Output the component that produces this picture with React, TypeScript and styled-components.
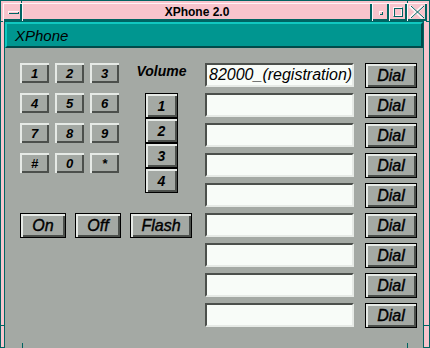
import { Fragment } from 'react'
import styled, { createGlobalStyle } from 'styled-components'

// colours
const pink = '#f8c4cc'
const pinkLight = '#fff4f6'
const teal = '#006462'
const gray = '#a4a9a4'
const light = '#e6eae6'
const dark = '#4c504c'

const GlobalStyle = createGlobalStyle`
  html, body {
    margin: 0;
    padding: 0;
    background: #ffffff;
  }
  body {
    font-family: "Liberation Sans", Arial, sans-serif;
  }
`

// window frame
const Window = styled.div`
  position: relative;
  width: 430px;
  height: 348px;
  box-sizing: border-box;
  background: ${pink};
  padding: 3px 3px 0 3px;
  box-shadow: inset 1px 1px 0 ${teal}, inset -1px -1px 0 ${teal};
  display: flex;
  flex-direction: column;
`

const CornerMark = styled.span<{ $top: number; $left: number; $w: number; $h: number }>`
  position: absolute;
  top: ${(p) => p.$top}px;
  left: ${(p) => p.$left}px;
  width: ${(p) => p.$w}px;
  height: ${(p) => p.$h}px;
  background: ${teal};
`

const TitleBar = styled.div`
  display: flex;
  height: 18px;
`

const FrameButton = styled.div<{ $width: number }>`
  width: ${(p) => p.$width}px;
  flex: ${(p) => (p.$width ? '0 0 auto' : '1 1 auto')};
  box-sizing: border-box;
  background: ${pink};
  box-shadow: inset 1px 1px 0 ${pinkLight}, inset -2px -2px 0 ${teal};
  display: flex;
  align-items: center;
  justify-content: center;
`

const Title = styled(FrameButton)`
  font-size: 12px;
  font-weight: bold;
  color: #000;
  padding-bottom: 1px;
`

const MenuGlyph = styled.span`
  width: 11px;
  height: 3px;
  margin-left: 1px;
  background: ${pink};
  box-shadow: inset 1px 1px 0 ${pinkLight}, inset -1px -1px 0 ${teal};
`

const MinGlyph = styled.span`
  width: 4px;
  height: 4px;
  margin-top: 1px;
  background: ${pink};
  box-shadow: inset 1px 1px 0 ${pinkLight}, inset -1px -1px 0 ${teal};
`

const MaxGlyph = styled.span`
  width: 10px;
  height: 10px;
  box-sizing: border-box;
  border: 1px solid;
  border-color: ${pinkLight} ${teal} ${teal} ${pinkLight};
  box-shadow: inset 1px 1px 0 ${teal}, inset -1px -1px 0 ${pinkLight};
`

const Client = styled.div`
  margin: 1px 4px 0 2px;
  flex: 1;
  display: flex;
  flex-direction: column;
  box-shadow: 0 0 0 1px ${teal};
`

const MenuBar = styled.div`
  height: 26px;
  box-sizing: border-box;
  background: #009690;
  border: 2px solid;
  border-color: #10c8c0 #004a4a #004a4a #10c8c0;
  padding-left: 8px;
  display: flex;
  align-items: center;
  font-size: 15px;
  font-style: italic;
  color: #000;
`

const Body = styled.div`
  flex: 1;
  background: ${gray};
  padding: 15px 0 0 15px;
  display: flex;
  align-items: flex-start;
`

// left side
const LeftPane = styled.div`
  width: 185px;
  display: flex;
  flex-direction: column;
`

const TopArea = styled.div`
  display: flex;
  align-items: flex-start;
`

const Keypad = styled.div`
  display: grid;
  grid-template-columns: repeat(3, 29px);
  grid-auto-rows: 20px;
  column-gap: 6px;
  row-gap: 10px;
`

const KeyButton = styled.button`
  box-sizing: border-box;
  margin: 0;
  padding: 0;
  border: none;
  background: ${gray};
  box-shadow: inset 2px 2px 0 ${light}, inset -2px -2px 0 ${dark};
  font-family: inherit;
  font-size: 13px;
  font-weight: bold;
  font-style: italic;
  color: #000;
`

const VolumeColumn = styled.div`
  margin-left: 18px;
  width: 49px;
  display: flex;
  flex-direction: column;
  align-items: center;
`

const VolumeLabel = styled.div`
  font-size: 14px;
  font-weight: bold;
  font-style: italic;
  line-height: 16px;
  white-space: nowrap;
  margin-bottom: 14px;
`

const VolumeButton = styled.button`
  box-sizing: border-box;
  width: 33px;
  height: 25px;
  margin: 0;
  padding: 0;
  border: 1px solid #000;
  background: ${gray};
  box-shadow: inset 2px 2px 0 ${light}, inset -2px -2px 0 ${dark};
  font-family: inherit;
  font-size: 14px;
  font-weight: bold;
  font-style: italic;
  color: #000;
`

const ControlRow = styled.div`
  margin-top: 20px;
  display: flex;
  gap: 9px;
`

const PushButton = styled.button<{ $width: number }>`
  box-sizing: border-box;
  width: ${(p) => p.$width}px;
  height: 25px;
  margin: 0;
  padding: 0;
  border: 1px solid #000;
  background: ${gray};
  box-shadow: inset 2px 2px 0 ${light}, inset -2px -2px 0 ${dark};
  font-family: inherit;
  font-size: 16px;
  font-style: italic;
  -webkit-text-stroke: 0.4px #000;
  color: #000;
`

// right side
const DialGrid = styled.div`
  display: grid;
  grid-template-columns: 149px 52px;
  grid-auto-rows: 24px;
  column-gap: 11px;
  row-gap: 6px;
`

const NumberField = styled.input`
  box-sizing: border-box;
  width: 100%;
  height: 24px;
  margin: 0;
  padding: 0 0 0 2px;
  border: 2px solid;
  border-color: ${dark} ${light} ${light} ${dark};
  background: #f8fcf8;
  outline: none;
  font-family: inherit;
  font-size: 16px;
  font-style: italic;
  color: #000;
`

const entries = ['82000_(registration)', '', '', '', '', '', '', '', '']
const keys = ['1', '2', '3', '4', '5', '6', '7', '8', '9', '#', '0', '*']

export default function App() {
  return (
    <>
      <GlobalStyle />
      <Window>
        <CornerMark $top={0} $left={21} $w={1} $h={3} />
        <CornerMark $top={0} $left={407} $w={1} $h={3} />
        <CornerMark $top={21} $left={0} $w={3} $h={1} />
        <CornerMark $top={21} $left={426} $w={4} $h={1} />
        <CornerMark $top={325} $left={0} $w={4} $h={1} />
        <CornerMark $top={325} $left={424} $w={6} $h={1} />
        <CornerMark $top={343} $left={22} $w={1} $h={5} />
        <CornerMark $top={343} $left={407} $w={1} $h={5} />
        <TitleBar>
          <FrameButton $width={19}>
            <MenuGlyph />
          </FrameButton>
          <Title $width={0}>XPhone 2.0</Title>
          <FrameButton $width={17}>
            <MinGlyph />
          </FrameButton>
          <FrameButton $width={18}>
            <MaxGlyph />
          </FrameButton>
          <FrameButton $width={20}>
            <svg width="16" height="14" viewBox="0 0 16 14">
              <path d="M1 1 L14 13 M14 1 L1 13" stroke={pinkLight} strokeWidth="3" fill="none" />
              <path d="M2 1 L15 13 M15 1 L2 13" stroke={teal} strokeWidth="1" fill="none" />
            </svg>
          </FrameButton>
        </TitleBar>
        <Client>
          <MenuBar>XPhone</MenuBar>
          <Body>
            <LeftPane>
              <TopArea>
                <Keypad>
                  {keys.map((k) => (
                    <KeyButton key={k}>{k}</KeyButton>
                  ))}
                </Keypad>
                <VolumeColumn>
                  <VolumeLabel>Volume</VolumeLabel>
                  {[1, 2, 3, 4].map((v) => (
                    <VolumeButton key={v}>{v}</VolumeButton>
                  ))}
                </VolumeColumn>
              </TopArea>
              <ControlRow>
                <PushButton $width={46}>On</PushButton>
                <PushButton $width={46}>Off</PushButton>
                <PushButton $width={62}>Flash</PushButton>
              </ControlRow>
            </LeftPane>
            <DialGrid>
              {entries.map((value, i) => (
                <Fragment key={i}>
                  <NumberField readOnly defaultValue={value} />
                  <PushButton $width={52}>Dial</PushButton>
                </Fragment>
              ))}
            </DialGrid>
          </Body>
        </Client>
      </Window>
    </>
  )
}
